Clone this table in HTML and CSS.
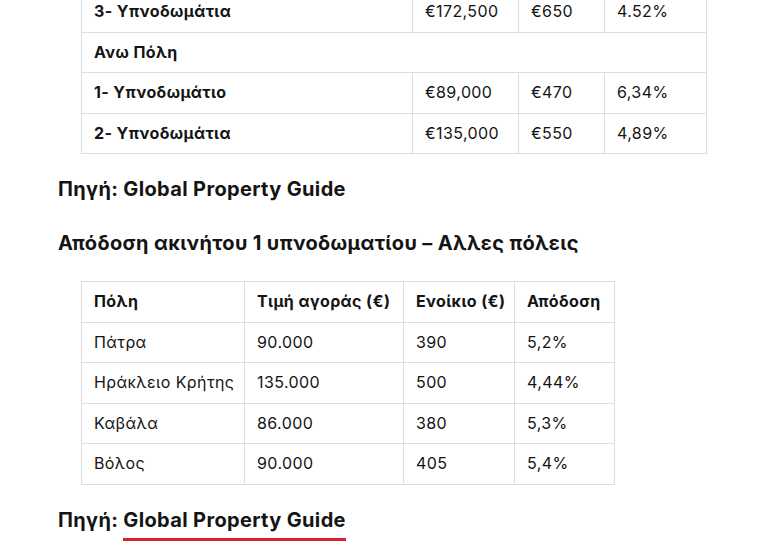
FILE: index.html
```html
<!DOCTYPE html>
<html lang="el">
<head>
<meta charset="utf-8">
<title>Απόδοση ακινήτων</title>
<link rel="stylesheet" href="styles.css">
</head>
<body>
<main class="article">
  <table class="data data-main">
    <colgroup>
      <col class="c1a"><col class="c1b"><col class="c1c"><col class="c1d">
    </colgroup>
    <tbody>
      <tr><td class="strong">3- Υπνοδωμάτια</td><td>€172,500</td><td>€650</td><td>4.52%</td></tr>
      <tr><td class="strong" colspan="4">Ανω Πόλη</td></tr>
      <tr><td class="strong">1- Υπνοδωμάτιο</td><td>€89,000</td><td>€470</td><td>6,34%</td></tr>
      <tr><td class="strong">2- Υπνοδωμάτια</td><td>€135,000</td><td>€550</td><td>4,89%</td></tr>
    </tbody>
  </table>

  <p class="source">Πηγή: Global Property Guide</p>

  <h2 class="heading">Απόδοση ακινήτου 1 υπνοδωματίου – Αλλες πόλεις</h2>

  <table class="data data-cities">
    <colgroup>
      <col class="c2a"><col class="c2b"><col class="c2c"><col class="c2d">
    </colgroup>
    <thead>
      <tr><th>Πόλη</th><th>Τιμή αγοράς (€)</th><th>Ενοίκιο (€)</th><th>Απόδοση</th></tr>
    </thead>
    <tbody>
      <tr><td>Πάτρα</td><td>90.000</td><td>390</td><td>5,2%</td></tr>
      <tr><td>Ηράκλειο Κρήτης</td><td>135.000</td><td>500</td><td>4,44%</td></tr>
      <tr><td>Καβάλα</td><td>86.000</td><td>380</td><td>5,3%</td></tr>
      <tr><td>Βόλος</td><td>90.000</td><td>405</td><td>5,4%</td></tr>
    </tbody>
  </table>

  <p class="source source-last">Πηγή: <span class="source-link">Global Property Guide</span></p>
</main>
</body>
</html>
```

FILE: styles.css
```css
html, body {
  margin: 0;
  padding: 0;
  background: #ffffff;
}

body {
  font-family: "Inter", "Noto Sans", "Liberation Sans", sans-serif;
  color: #141414;
}

.article {
  padding: 0 0 0 58px;
  display: flex;
  flex-direction: column;
  align-items: flex-start;
}

.data {
  border-collapse: collapse;
  margin-left: 23px;
  font-size: 16px;
  letter-spacing: 0.4px;
  table-layout: fixed;
}

.data-main {
  margin-top: -9px;
  width: 625px;
}

.data-cities {
  width: 533px;
  margin-top: 24px;
}

.c1a { width: 331px; }
.c1b { width: 106px; }
.c1c { width: 86px; }
.c1d { width: 102px; }

.c2a { width: 163px; }
.c2b { width: 159px; }
.c2c { width: 111px; }
.c2d { width: 100px; }

.data td,
.data th {
  border: 1px solid #dddddd;
  padding: 9px 12px;
  line-height: 21.5px;
  text-align: left;
  vertical-align: middle;
  white-space: nowrap;
}

.data th,
.data .strong {
  font-weight: 700;
}

.source {
  margin: 21px 0 0;
  font-size: 20px;
  line-height: 28px;
  font-weight: 700;
  letter-spacing: 0.35px;
}

.heading {
  margin: 26px 0 0;
  font-size: 20px;
  line-height: 28px;
  font-weight: 700;
  letter-spacing: 0.35px;
}

.source-last {
  margin-bottom: 20px;
}

.source-link {
  display: inline-block;
  line-height: 24px;
  padding-bottom: 6px;
  border-bottom: 3px solid #d6222f;
}
```
